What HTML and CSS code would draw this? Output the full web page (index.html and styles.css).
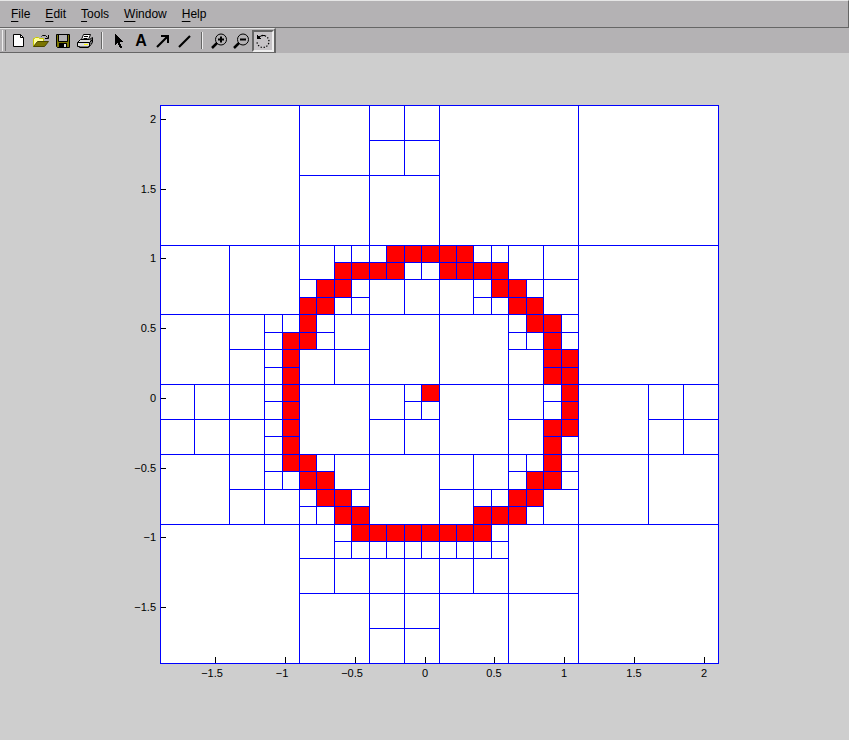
FILE: index.html
```
<!DOCTYPE html>
<html lang="en">
<head>
<meta charset="utf-8">
<title>Figure</title>
<link rel="stylesheet" href="styles.css">
</head>
<body>
<nav class="menubar">
  <button class="menu"><u>F</u>ile</button>
  <button class="menu"><u>E</u>dit</button>
  <button class="menu"><u>T</u>ools</button>
  <button class="menu"><u>W</u>indow</button>
  <button class="menu"><u>H</u>elp</button>
</nav>
<div class="toolrow">
  <div class="toolbar">
    <span class="grip"></span>
    <button class="tool" aria-label="New"><svg viewBox="0 0 18 16"><path d="M3.5 1.500h7l3 3v9h-10z" fill="#fff" stroke="#000"/><path d="M10.500 1.500v3h3" fill="none" stroke="#000"/></svg></button>
    <button class="tool" aria-label="Open"><svg viewBox="0 0 18 16"><path d="M1.500 13.500v-8h1l1-1h3l1 1h4v3" fill="#ffff9c" stroke="#c8c800"/><path d="M1.500 13.500l4-5h11l-4 5z" fill="#7b7500" stroke="#4a4600"/><path d="M9.500 3.500l1-1h3l2 2M16.500 2v3.500H13" fill="none" stroke="#000"/></svg></button>
    <button class="tool" aria-label="Save"><svg viewBox="0 0 18 16"><path d="M2.500 1.500h13v13h-12l-1-1z" fill="#7b7500" stroke="#000"/><path d="M5 2h8v6H5z" fill="#b4b2b4"/><path d="M4.500 2v6.500h9V2" fill="none" stroke="#000"/><path d="M5 10h8v4H5z"/><path d="M10 11h2v3h-2z" fill="#ddd"/></svg></button>
    <button class="tool" aria-label="Print"><svg viewBox="0 0 18 16"><path d="M5.500 6.500l2-5h7l-2 5z" fill="#fff" stroke="#000"/><path d="M8 3.500h4M7.500 5.500h4" stroke="#000"/><path d="M1.500 9.500l3-3h9l3-2v5l-3 4h-12z" fill="#ddd" stroke="#000"/><path d="M1.500 9.500h12v4M13.500 9.500l3-3M15 6v5" fill="none" stroke="#000"/><path d="M3.500 13.500v1h9v-1" fill="#fff" stroke="#000"/><path d="M8 11h4v1H8z" fill="#ff0"/></svg></button>
    <span class="rule"></span>
    <button class="tool" aria-label="Select"><svg viewBox="0 0 18 16"><path shape-rendering="crispEdges" d="M5 1v11h1v-1h1v-1h1v2h1v2h1v1h2v-2h-1v-2h-1V9h3V8h-1V7h-1V6h-1V5H9V4H8V3H7V2H6V1z"/></svg></button>
    <button class="tool letter" aria-label="Add text">A</button>
    <button class="tool" aria-label="Add arrow"><svg viewBox="0 0 18 16"><path d="M3 14L13 4" stroke="#000" stroke-width="2.200"/><path d="M7 2h8v8h-2V6l-2-2H7z"/></svg></button>
    <button class="tool" aria-label="Add line"><svg viewBox="0 0 18 16"><path d="M3 14L14 3" stroke="#000" stroke-width="2.200"/></svg></button>
    <span class="rule"></span>
    <button class="tool" aria-label="Zoom in"><svg viewBox="0 0 18 16"><circle cx="11" cy="6.500" r="5.500" fill="none" stroke="#000"/><path d="M8 6.500h6M11 3.500v6" stroke="#000" stroke-width="2"/><path d="M7 10l-5 5" stroke="#000" stroke-width="2.500"/></svg></button>
    <button class="tool" aria-label="Zoom out"><svg viewBox="0 0 18 16"><circle cx="11" cy="6.500" r="5.500" fill="none" stroke="#000"/><path d="M8 6.500h6" stroke="#000" stroke-width="2"/><path d="M7 10l-5 5" stroke="#000" stroke-width="2.500"/></svg></button>
    <button class="tool pressed" aria-label="Rotate"><svg viewBox="0 0 18 16"><path d="M5 4a6 6 0 1 1-2 5" fill="none" stroke="#000" stroke-width="1.300" stroke-dasharray="1.300 1.700"/><path d="M3 2v4h4V5H6V4H5V3H4V2z"/><path d="M6 3.500l2-1h3" fill="none" stroke="#000"/></svg></button>
  </div>
</div>
<main class="figure">
  <svg class="plot" id="plot" viewBox="0 0 609 600" role="img" aria-label="Adaptive quadtree around the unit circle"></svg>
</main>
<script src="plot.js"></script>
</body>
</html>
```
FILE: styles.css
```
* { box-sizing: border-box; }
body {
  margin: 0;
  min-height: 100vh;
  background: #cecece;
  color: #000;
  font-family: "Liberation Sans", Arial, sans-serif;
}
.menubar {
  display: flex;
  gap: 1px;
  height: 28px;
  padding: 0 4px;
  background: #b4b2b4;
  border-top: 1px solid #e6e6e6;
  border-right: 1px solid #666;
  border-bottom: 1px solid #666;
}
.menu {
  border: 0;
  padding: 0 7px;
  background: none;
  font: 12px/26px "Liberation Sans", Arial, sans-serif;
}
.menu u { text-decoration-thickness: 1px; text-underline-offset: 3px; }
.toolrow { background: #b4b2b4; height: 25px; }
.toolbar {
  display: flex;
  align-items: center;
  width: max-content;
  height: 25px;
  border-top: 1px solid #e6e6e6;
  border-right: 2px solid #666;
  border-bottom: 1px solid #666;
}
.grip {
  width: 4px;
  height: 21px;
  margin: 0 2px;
  border-left: 1px solid #eee;
  border-right: 1px solid #777;
}
.rule {
  width: 2px;
  height: 17px;
  margin: 0 5px;
  border-left: 1px solid #666;
  border-right: 1px solid #eee;
}
.tool {
  display: flex;
  align-items: center;
  justify-content: center;
  width: 22px;
  height: 22px;
  padding: 0;
  border: 0;
  background: none;
}
.tool svg { flex: none; width: 18px; height: 16px; }
.letter { font: bold 16px/22px "Liberation Sans", Arial, sans-serif; }
.pressed {
  border: 2px solid;
  border-color: #666 #eee #eee #666;
  background: #c6c3c6;
}
.figure { padding: 43px 120px 0; }
.plot { display: block; width: 100%; height: auto; overflow: visible; }
.paper { fill: #fff; }
.cell { fill: #f00; }
.mesh { fill: none; stroke: #00f; shape-rendering: crispEdges; }
.tick { fill: none; stroke: #000; shape-rendering: crispEdges; }
.label { font-size: 11px; }
.label-x { text-anchor: middle; }
.label-y { text-anchor: end; }
```
FILE: plot.js
```
// Axes box: 32 x 32 finest cells covering -1.9 .. 2.1 in both directions.
const left = 40, top0 = 9, size = 558, n = 32;
const X = k => left + Math.floor(k * size / n);
const Y = k => top0 + Math.round(k * size / n);

// row: [from, to] column spans of horizontal edges
const rows = {
  0: [[0,32]], 2: [[12,16]], 4: [[8,16]], 8: [[0,32]], 9: [[10,20]], 10: [[8,24]],
  11: [[8,12],[18,22]], 12: [[0,24]], 13: [[6,10],[20,24]], 14: [[4,12],[20,24]],
  15: [[6,8],[22,24]], 16: [[0,32]], 17: [[6,8],[14,16],[22,24]],
  18: [[0,8],[12,16],[20,24],[28,32]], 19: [[6,8],[22,24]], 20: [[0,32]],
  21: [[6,10],[20,24]], 22: [[4,12],[16,24]], 23: [[8,12],[18,22]], 24: [[0,32]],
  25: [[10,20]], 26: [[8,20]], 28: [[8,24]], 30: [[12,16]], 32: [[0,32]]
};
// column: [from, to] row spans of vertical edges
const cols = {
  0: [[0,32]], 2: [[16,20]], 4: [[8,24]], 6: [[12,24]], 7: [[12,22]], 8: [[0,32]],
  9: [[10,14],[20,24]], 10: [[8,16],[20,28]], 11: [[8,12],[22,26]], 12: [[0,32]],
  13: [[8,10],[24,26]], 14: [[0,4],[8,12],[16,20],[24,32]],
  15: [[8,10],[16,18],[24,26]], 16: [[0,32]], 17: [[8,10],[24,26]],
  18: [[8,12],[20,28]], 19: [[8,12],[22,26]], 20: [[8,32]], 21: [[10,14],[20,24]],
  22: [[8,24]], 23: [[12,22]], 24: [[0,32]], 28: [[16,24]], 30: [[16,20]], 32: [[0,32]]
};
// row: filled columns
const filled = {
  8: [13,14,15,16,17], 9: [10,11,12,13,16,17,18,19], 10: [9,10,19,20],
  11: [8,9,20,21], 12: [8,21,22], 13: [7,8,22], 14: [7,22,23], 15: [7,22,23],
  16: [7,15,23], 17: [7,23], 18: [7,22,23], 19: [7,22], 20: [7,8,22],
  21: [8,9,21,22], 22: [9,10,20,21], 23: [10,11,18,19,20],
  24: [11,12,13,14,15,16,17,18]
};

let out = `<rect class="paper" x="${left}" y="${top0}" width="${size}" height="${size}"/>`;
for (const [r, list] of Object.entries(filled)) {
  for (const c of list) {
    out += `<rect class="cell" x="${X(c)}" y="${Y(+r)}" width="${X(c + 1) - X(c)}" height="${Y(+r + 1) - Y(+r)}"/>`;
  }
}
let mesh = "";
for (const [k, spans] of Object.entries(rows)) {
  for (const [a, b] of spans) mesh += `M${X(a)} ${Y(k) + 0.5}H${X(b) + 1}`;
}
for (const [k, spans] of Object.entries(cols)) {
  for (const [a, b] of spans) mesh += `M${X(k) + 0.5} ${Y(a)}V${Y(b) + 1}`;
}
out += `<path class="mesh" d="${mesh}"/>`;

let ticks = "", labels = "";
for (let v = -1.5; v <= 2; v += 0.5) {
  const x = left + Math.floor((v + 1.9) * size / 4);
  const y = top0 + Math.round((2.1 - v) * size / 4);
  const text = String(v).replace("-", "−");
  const shift = v < 0 ? 3 : 0;
  ticks += `M${x + 0.5} ${top0 + size - 6}v6M${left + 1} ${y + 0.5}h5`;
  labels += `<text class="label label-x" x="${x - shift}" y="${top0 + size + 14}">${text}</text>`;
  labels += `<text class="label label-y" x="${left - 4}" y="${y + 4}">${text}</text>`;
}
out += `<path class="tick" d="${ticks}"/>${labels}`;
document.getElementById("plot").innerHTML = out;
```
